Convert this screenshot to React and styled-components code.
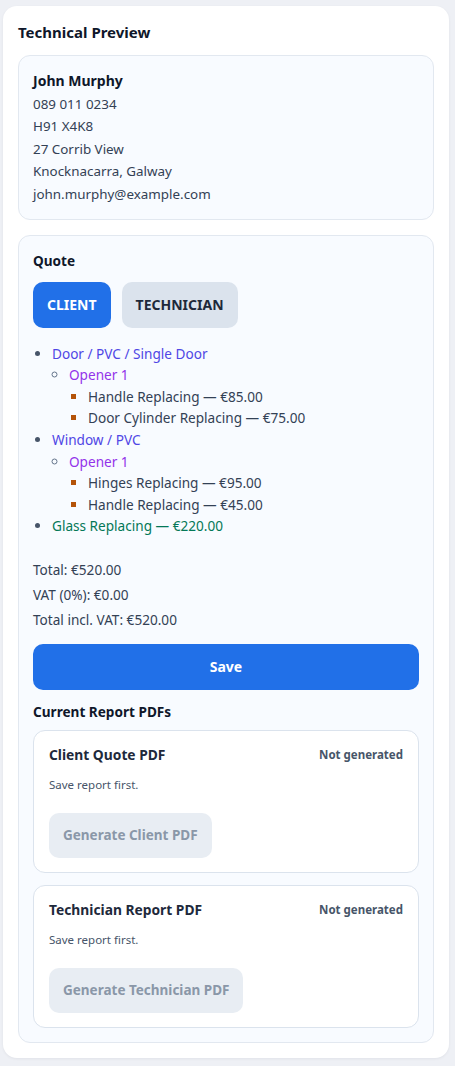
import styled, { createGlobalStyle } from "styled-components";

const contact = ["089 011 0234", "H91 X4K8", "27 Corrib View", "Knocknacarra, Galway", "john.murphy@example.com"];

const quote = [
  {
    label: "Door / PVC / Single Door",
    openers: [
      { label: "Opener 1", items: ["Handle Replacing — €85.00", "Door Cylinder Replacing — €75.00"] },
    ],
  },
  {
    label: "Window / PVC",
    openers: [
      { label: "Opener 1", items: ["Hinges Replacing — €95.00", "Handle Replacing — €45.00"] },
    ],
  },
];

const pdfs = [
  { title: "Client Quote PDF", button: "Generate Client PDF" },
  { title: "Technician Report PDF", button: "Generate Technician PDF" },
];

const App = () => {
  return (
    <Page>
      <GlobalStyle />
      <Card>
        <Title>Technical Preview</Title>
        <Panel>
          <Name>John Murphy</Name>
          {contact.map((line) => (
            <Line key={line}>{line}</Line>
          ))}
        </Panel>
        <QuotePanel>
          <SectionTitle>Quote</SectionTitle>
          <Tabs>
            <Tab $active>Client</Tab>
            <Tab>Technician</Tab>
          </Tabs>
          <TopList>
            {quote.map((group) => (
              <TopItem key={group.label}>
                {group.label}
                <OpenerList>
                  {group.openers.map((op) => (
                    <OpenerItem key={op.label}>
                      {op.label}
                      <ItemList>
                        {op.items.map((it) => (
                          <Item key={it}>{it}</Item>
                        ))}
                      </ItemList>
                    </OpenerItem>
                  ))}
                </OpenerList>
              </TopItem>
            ))}
            <TopItem $extra>Glass Replacing — €220.00</TopItem>
          </TopList>
          <Totals>
            <Line>Total: €520.00</Line>
            <Line>VAT (0%): €0.00</Line>
            <Line>Total incl. VAT: €520.00</Line>
          </Totals>
          <SaveButton>Save</SaveButton>
          <SectionTitle>Current Report PDFs</SectionTitle>
          <PdfList>
            {pdfs.map((pdf) => (
              <PdfCard key={pdf.title}>
                <PdfHead>
                  <PdfTitle>{pdf.title}</PdfTitle>
                  <Status>Not generated</Status>
                </PdfHead>
                <Hint>Save report first.</Hint>
                <GenButton disabled>{pdf.button}</GenButton>
              </PdfCard>
            ))}
          </PdfList>
        </QuotePanel>
      </Card>
    </Page>
  );
};

const GlobalStyle = createGlobalStyle`
  body {
    margin: 0;
    background: #eef0f5;
    font-family: "Segoe UI", "Noto Sans", "Open Sans", sans-serif;
    color: #0f172a;
  }
  * { box-sizing: border-box; }
`;

const Page = styled.div`
  padding: 6px 6px 8px 3px;
`;

const Card = styled.div`
  background: #fff;
  border-radius: 14px;
  padding: 16px 15px 15px;
  box-shadow: 0 1px 3px rgba(15, 23, 42, 0.06);
`;

const Title = styled.h2`
  margin: 0 0 13px;
  font-size: 15px;
  line-height: 20px;
  font-weight: 700;
  color: #0f172a;
`;

const Panel = styled.div`
  background: #f8fbff;
  border: 1px solid #e2e8f0;
  border-radius: 12px;
  padding: 14px 14px 13px;
  font-size: 13.4px;
  line-height: 22.6px;
  color: #334155;
`;

const Name = styled.div`
  font-size: 14px;
  font-weight: 700;
  color: #0f172a;
`;

const Line = styled.div``;

const QuotePanel = styled(Panel)`
  margin-top: 15px;
  padding: 15px 14px 14px;
`;

const SectionTitle = styled.div`
  font-size: 13.6px;
  line-height: 20px;
  font-weight: 700;
  color: #0f172a;
`;

const Tabs = styled.div`
  display: flex;
  gap: 11px;
  margin: 11px 0 15px;
`;

const Tab = styled.button`
  height: 46px;
  padding: 0 14px;
  border: 0;
  border-radius: 10px;
  font-family: inherit;
  font-size: 14px;
  font-weight: 700;
  text-transform: uppercase;
  background: ${(p) => (p.$active ? "#2170e8" : "#dbe3ed")};
  color: ${(p) => (p.$active ? "#fff" : "#1e293b")};
`;

const TopList = styled.ul`
  margin: 0;
  padding-left: 19px;
  font-size: 13.6px;
  line-height: 21.6px;
  li::marker { color: #475569; }
`;

const TopItem = styled.li`
  color: ${(p) => (p.$extra ? "#047857" : "#4f46e5")};
`;

const OpenerList = styled.ul`
  margin: 0;
  padding-left: 17px;
  list-style: circle;
  & > li::marker { color: #64748b; }
`;

const OpenerItem = styled.li`
  color: #9333ea;
`;

const ItemList = styled.ul`
  margin: 0;
  padding-left: 19px;
  list-style: square;
  & > li::marker { color: #b45309; }
`;

const Item = styled.li`
  color: #334155;
`;

const Totals = styled.div`
  margin: 20px 0 12px;
  font-size: 13.6px;
  line-height: 25px;
`;

const SaveButton = styled.button`
  width: 100%;
  height: 46px;
  margin-bottom: 12px;
  border: 0;
  border-radius: 10px;
  background: #2170e8;
  color: #fff;
  font-family: inherit;
  font-size: 14px;
  font-weight: 700;
`;

const PdfList = styled.div`
  display: flex;
  flex-direction: column;
  gap: 12px;
  margin-top: 8px;
`;

const PdfCard = styled.div`
  background: #fff;
  border: 1px solid #dbe3ed;
  border-radius: 12px;
  padding: 14px 15px 14px;
`;

const PdfHead = styled.div`
  display: flex;
  justify-content: space-between;
  align-items: center;
  height: 20px;
  line-height: 20px;
`;

const PdfTitle = styled.div`
  font-size: 13.8px;
  font-weight: 700;
  color: #1e293b;
`;

const Status = styled.div`
  font-size: 11.5px;
  font-weight: 700;
  color: #475569;
`;

const Hint = styled.div`
  margin: 12px 0 20px;
  font-size: 11.5px;
  line-height: 16px;
  color: #475569;
`;

const GenButton = styled.button`
  display: block;
  height: 45px;
  padding: 0 14px;
  border: 0;
  border-radius: 10px;
  background: #e8edf3;
  color: #8a97a8;
  font-family: inherit;
  font-size: 13.5px;
  font-weight: 700;
`;

export default App;
